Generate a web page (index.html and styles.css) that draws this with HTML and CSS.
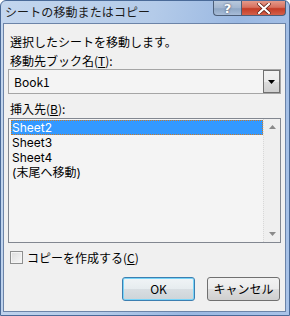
FILE: index.html
```html
<!DOCTYPE html>
<html lang="ja">
<head>
<meta charset="utf-8">
<link rel="stylesheet" href="styles.css">
</head>
<body>
<div class="window">
  <div class="titlebar">
    <span class="title">シートの移動またはコピー</span>
    <div class="caption-btns">
      <div class="cbtn help">?</div>
      <div class="cbtn close">
        <svg width="14" height="11" viewBox="0 0 14 11"><path d="M2 1 L12 10 M12 1 L2 10" stroke="#5a1a10" stroke-width="3.6" stroke-linecap="square"/><path d="M2 1 L12 10 M12 1 L2 10" stroke="#ffffff" stroke-width="2.2" stroke-linecap="square"/></svg>
      </div>
    </div>
  </div>
  <div class="client">
    <div class="label first">選択したシートを移動します。</div>
    <div class="label">移動先ブック名(<u>T</u>):</div>
    <div class="combo">
      <span class="combo-text">Book1</span>
      <div class="combo-btn"><svg width="7" height="4" viewBox="0 0 7 4"><path d="M0 0 H7 L3.5 4 Z" fill="#000"/></svg></div>
    </div>
    <div class="label">挿入先(<u>B</u>):</div>
    <div class="listbox">
      <div class="items">
        <div class="item selected">Sheet2</div>
        <div class="item">Sheet3</div>
        <div class="item">Sheet4</div>
        <div class="item">(末尾へ移動)</div>
      </div>
      <div class="scrollbar">
        <svg width="7" height="4" viewBox="0 0 7 4"><path d="M0 4 H7 L3.5 0 Z" fill="#8a8a8a"/></svg>
        <svg width="7" height="4" viewBox="0 0 7 4"><path d="M0 0 H7 L3.5 4 Z" fill="#8a8a8a"/></svg>
      </div>
    </div>
    <label class="check">
      <span class="box"></span>
      <span>コピーを作成する(<u>C</u>)</span>
    </label>
    <div class="buttons">
      <div class="btn default">OK</div>
      <div class="btn">キャンセル</div>
    </div>
  </div>
</div>
</body>
</html>
```
FILE: styles.css
```css
* { box-sizing: border-box; }
html, body { margin: 0; padding: 0; }
body {
  width: 290px; height: 316px; overflow: hidden;
  font-family: "Noto Sans CJK JP", "Noto Sans", sans-serif;
  font-size: 12px;
  color: #000;
}
.window {
  width: 290px; height: 316px;
  display: flex; flex-direction: column;
  background: linear-gradient(100deg, #c3d6ee 0%, #b4cbe9 45%, #9ab8e2 70%, #a9c3e8 100%);
  border: 1px solid #4a6a98;
  border-radius: 6px 6px 0 0;
}
.titlebar {
  height: 22px; flex: none;
  display: flex; align-items: flex-start;
  padding-left: 4px;
}
.title {
  font-size: 12px; line-height: 12px; margin-top: 5px;
  color: #1a1a1a;
  letter-spacing: 0.1px;
}
.caption-btns {
  margin-left: auto; margin-right: 3px;
  display: flex;
}
.cbtn {
  height: 15px;
  display: flex; align-items: center; justify-content: center;
  border: 1px solid #4c5e78;
  border-top: none;
}
.help {
  width: 28px;
  border-radius: 0 0 0 4px;
  border-right: none;
  background: linear-gradient(#b8c8dc, #a2b6d0 50%, #8ea6c4 55%, #a8bcd8);
  color: #fff; font-weight: bold; font-size: 13px; line-height: 13px;
  font-family: "DejaVu Sans", sans-serif;
  text-shadow: 0 0 2px #334;
}
.close {
  width: 45px;
  border-radius: 0 0 4px 0;
  background: linear-gradient(#e49a8a, #d8705e 45%, #c43c26 55%, #d4604a);
}
.client {
  flex: 1;
  margin: 0 3px 3px 2px;
  background: #f0f0f0;
  border: 1px solid #6c84a8;
  padding: 9px 4px 0 4px;
  display: flex; flex-direction: column;
}
.label { line-height: 17px; padding-left: 2px; }
.label.first { margin-bottom: 2px; }
.combo {
  height: 25px;
  border: 1px solid #a5a5a5;
  background: #f4f4f4;
  display: flex; align-items: stretch;
  margin-bottom: 6px;
}
.combo-text { flex: 1; padding-left: 5px; line-height: 23px; }
.combo-btn {
  width: 17px;
  border: 1px solid #707070;
  background: linear-gradient(#f2f2f2, #ebebeb 50%, #dddddd 51%, #cfcfcf);
  display: flex; align-items: center; justify-content: center;
}
.listbox {
  margin-top: 1px;
  height: 125px;
  border: 1px solid #828790;
  background: #f4f4f4;
  display: flex;
}
.items { flex: 1; padding: 1px 0 0 2px; }
.item {
  height: 15px; line-height: 15px; padding-left: 1px;
  font-family: "Inter", "Noto Sans CJK JP", sans-serif;
  font-size: 12px;
}
.item.selected {
  background: #3399ff; color: #fff;
  outline: 1px dotted #c87a2a; outline-offset: -1px;
}
.scrollbar {
  width: 17px;
  border-left: 1px dotted #d8d8d8;
  background: #efefef;
  display: flex; flex-direction: column; justify-content: space-between; align-items: center;
  padding: 6px 0 6px;
}
.check {
  display: flex; align-items: center; gap: 4px;
  margin-top: 6px; padding-left: 2px;
  height: 17px;
}
.box {
  width: 13px; height: 13px;
  border: 1px solid #8e8f8f;
  background: linear-gradient(135deg, #dcdcdc, #f8f8f8);
  box-shadow: inset 0 0 0 1px #f4f4f4;
}
.buttons {
  display: flex; justify-content: flex-end; gap: 12px;
  margin-top: 11px; padding-right: 1px;
}
.btn {
  width: 73px; height: 24px;
  border: 1px solid #707070;
  border-radius: 3px;
  background: linear-gradient(#f2f2f2, #ebebeb 50%, #dddddd 51%, #cfcfcf);
  display: flex; align-items: center; justify-content: center;
  line-height: 14px;
}
.btn.default {
  border-color: #3c7fb1;
  box-shadow: inset 0 0 0 1px #78d4f8;
  background: linear-gradient(#f0f4f6, #e6ecef 50%, #d8dee2 51%, #cdd4d8);
}
u { text-decoration: underline; text-underline-offset: 1px; }
```
